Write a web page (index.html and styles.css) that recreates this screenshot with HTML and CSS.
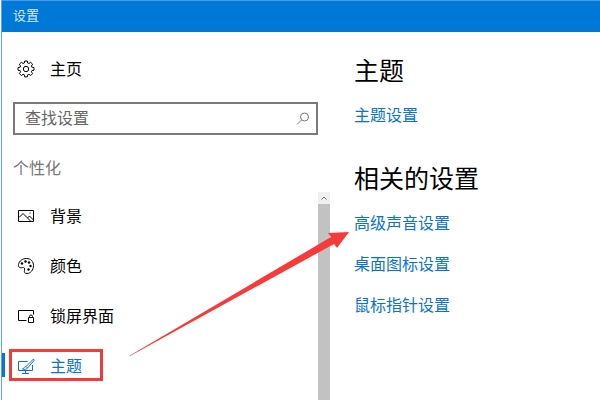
FILE: index.html
```
<!DOCTYPE html>
<html lang="zh-CN">
<head>
  <meta charset="UTF-8" />
  <meta name="viewport" content="width=device-width, initial-scale=1.0" />
  <title>设置</title>
  <link rel="stylesheet" href="styles.css">
</head>
<body>

  <div class="window">
    <header class="titlebar">设置</header>

    <div class="columns">
      <!-- Left side: home, search and category list -->
      <aside class="sidebar">
        <a class="nav-item home" href="#home">
          <svg class="icon" viewBox="0 0 18 18">
            <path d="M7.7 1h2.6l.4 2 1.2.5 1.8-1.2 1.9 1.9-1.2 1.8.5 1.2 2.1.4v2.6l-2.1.4-.5 1.2 1.2 1.8-1.9 1.9-1.8-1.2-1.2.5-.4 2.1H7.7l-.4-2.1-1.2-.5-1.8 1.2-1.9-1.9 1.2-1.8-.5-1.2L1 10.2V7.6l2.1-.4.5-1.2-1.2-1.8 1.9-1.9 1.8 1.2 1.2-.5z" />
            <circle cx="9" cy="9" r="2.7" />
          </svg>
          <span>主页</span>
        </a>

        <form class="search">
          <input type="text" placeholder="查找设置" aria-label="查找设置">
          <button type="submit" aria-label="搜索">
            <svg viewBox="0 0 14 14">
              <circle cx="8.5" cy="5" r="4" />
              <path d="M5.5 8 1 12.5" />
            </svg>
          </button>
        </form>

        <h2 class="category">个性化</h2>

        <div class="scroll-area">
          <nav>
            <a class="nav-item" href="#background">
              <svg class="icon" viewBox="0 0 18 18">
                <path d="M1.500 3.500h15v11h-15z" />
                <path d="M2 10.500l4-4 7.500 7.500M10.500 11l2-2 4 4M12.500 6h1" />
              </svg>
              <span>背景</span>
            </a>
            <a class="nav-item" href="#colors">
              <svg class="icon" viewBox="0 0 18 18">
                <path d="M1.5 7.5C2 4 5.5 1.5 9.500 1.500c4.200 0 7 3 7 7 0 4.500-3 8-6.500 8-2.500 0-3-1.500-2.500-3.200.5-2-.5-3.300-2-2.800-2 .8-4.300.2-4-3z" />
                <g class="dots">
                  <circle cx="5" cy="6.5" r="1.2" />
                  <circle cx="8.5" cy="4.5" r="1.2" />
                  <circle cx="12" cy="5.5" r="1.2" />
                  <circle cx="13.5" cy="9" r="1.2" />
                  <circle cx="11.5" cy="12.5" r="1.2" />
                </g>
              </svg>
              <span>颜色</span>
            </a>
            <a class="nav-item" href="#lockscreen">
              <svg class="icon" viewBox="0 0 18 18">
                <path d="M9.5 13.5h-8v-10h15v4" />
                <path d="M11.5 10.5h5v5h-5zM12.5 10.500v-1a1.500 1.500 0 0 1 3 0v1" />
              </svg>
              <span>锁屏界面</span>
            </a>
            <a class="nav-item active" href="#themes">
              <svg class="icon" viewBox="0 0 18 18">
                <path d="M10.5 4.5h-9v9h14V8M5 16.500h7M8.500 13.500v3" />
                <path d="M16.500 2 9 9.500l1.500 1.500L17 3.500zM9 9.500c-2 0-1.500 2-3.500 2.500 2 .7 4.500.5 5-1" />
              </svg>
              <span>主题</span>
            </a>
          </nav>
          <div class="scrollbar">
            <button type="button" aria-label="向上滚动">
              <svg viewBox="0 0 12 12"><path d="M3.5 7.5 6 5l2.5 2.500" /></svg>
            </button>
            <div class="thumb"></div>
          </div>
        </div>
      </aside>

      <!-- Right side: page content -->
      <main>
        <h1>主题</h1>
        <a href="#theme-settings">主题设置</a>

        <h1>相关的设置</h1>
        <a href="#sound">高级声音设置</a>
        <a href="#desktop-icons">桌面图标设置</a>
        <a href="#pointer">鼠标指针设置</a>
      </main>
    </div>

    <!-- Arrow from the themes item to the sound link -->
    <svg class="arrow" viewBox="0 0 220 125">
      <path d="M0 124 202 5 199 1 220 0 208 16 205 12 1 124z" />
    </svg>
  </div>

</body>
</html>
```
FILE: styles.css
```
/* Global reset and font settings */
*, *::before, *::after { box-sizing: border-box; }
body {
  margin: 0;
  font-family: "Noto Sans CJK SC", sans-serif;
  font-size: 16px;
  line-height: 24px;
  color: #000;
  background: #fff;
}

a { color: #0a74c9; text-decoration: none; }
h1, h2 { margin: 0; font-weight: 400; }

/* Window frame */
.window {
  position: relative;
  display: flex;
  flex-direction: column;
  height: 100vh;
  margin-left: 1px;
  border-left: 1px solid #5fa4e6;
  overflow: hidden;
}

.titlebar {
  flex: none;
  padding: 2px 11px 6px;
  border-top: 1px solid #4a9be3;
  background: #0078d7;
  color: #d4e9fa;
  font-size: 13px;
  line-height: 23px;
}

.columns {
  flex: 1;
  display: flex;
  min-height: 0;
}

/* Sidebar */
.sidebar {
  display: flex;
  flex: none;
  flex-direction: column;
  width: 328px;
  padding-top: 12px;
}

.nav-item {
  position: relative;
  display: flex;
  align-items: center;
  gap: 15px;
  height: 50px;
  padding-left: 15px;
  color: #000;
}
.nav-item span { padding-bottom: 2px; }

.icon {
  width: 18px;
  height: 18px;
  fill: none;
  stroke: currentColor;
  stroke-width: 1;
}
.dots { fill: currentColor; stroke: none; }

.search {
  display: flex;
  flex: none;
  height: 33px;
  margin: 8px 12px 0 11px;
  border: 2px solid #7a7a7a;
}
.search input {
  flex: 1;
  min-width: 0;
  padding: 0 0 3px 10px;
  border: none;
  outline: none;
  background: none;
  font: inherit;
}
.search input::placeholder { color: #666; opacity: 1; }
.search button {
  width: 26px;
  padding: 0 6px;
  border: none;
  background: none;
}
.search svg {
  display: block;
  width: 14px;
  height: 14px;
  fill: none;
  stroke: #777;
}

.category {
  margin: 20px 0 13px 11px;
  color: #777;
  font-size: 16px;
  line-height: 24px;
}

/* Scrolling category list */
.scroll-area {
  flex: 1;
  display: flex;
  min-height: 0;
}
.scroll-area nav {
  flex: 1;
  margin-top: -1px;
}

.scrollbar {
  display: flex;
  flex-direction: column;
  width: 12px;
}
.scrollbar button {
  width: 12px;
  height: 12px;
  padding: 0;
  border: none;
  background: #f0f0f0;
}
.scrollbar svg {
  display: block;
  fill: none;
  stroke: #666;
}
.thumb { flex: 1; background: #c2c2c2; }

/* Selected item, with its marker bar and red frame */
.active { color: #0a74c9; }
.active::before {
  content: "";
  position: absolute;
  left: 0;
  top: 12px;
  width: 3px;
  height: 24px;
  background: #0078d7;
}
.active::after {
  content: "";
  position: absolute;
  left: 7px;
  top: 8px;
  width: 94px;
  height: 32px;
  border: 3px solid #f23c3c;
}

/* Page content */
main {
  flex: 1;
  display: flex;
  flex-direction: column;
  align-items: flex-start;
  gap: 17px;
  padding: 19px 0 0 24px;
}
main h1 {
  font-size: 25px;
  line-height: 36px;
}
main a + h1 { margin-top: 16px; }
main h1 + a { margin-top: -2px; }

.arrow {
  position: absolute;
  left: 127px;
  top: 232px;
  width: 220px;
  height: 125px;
  fill: #f83a3a;
}
```
